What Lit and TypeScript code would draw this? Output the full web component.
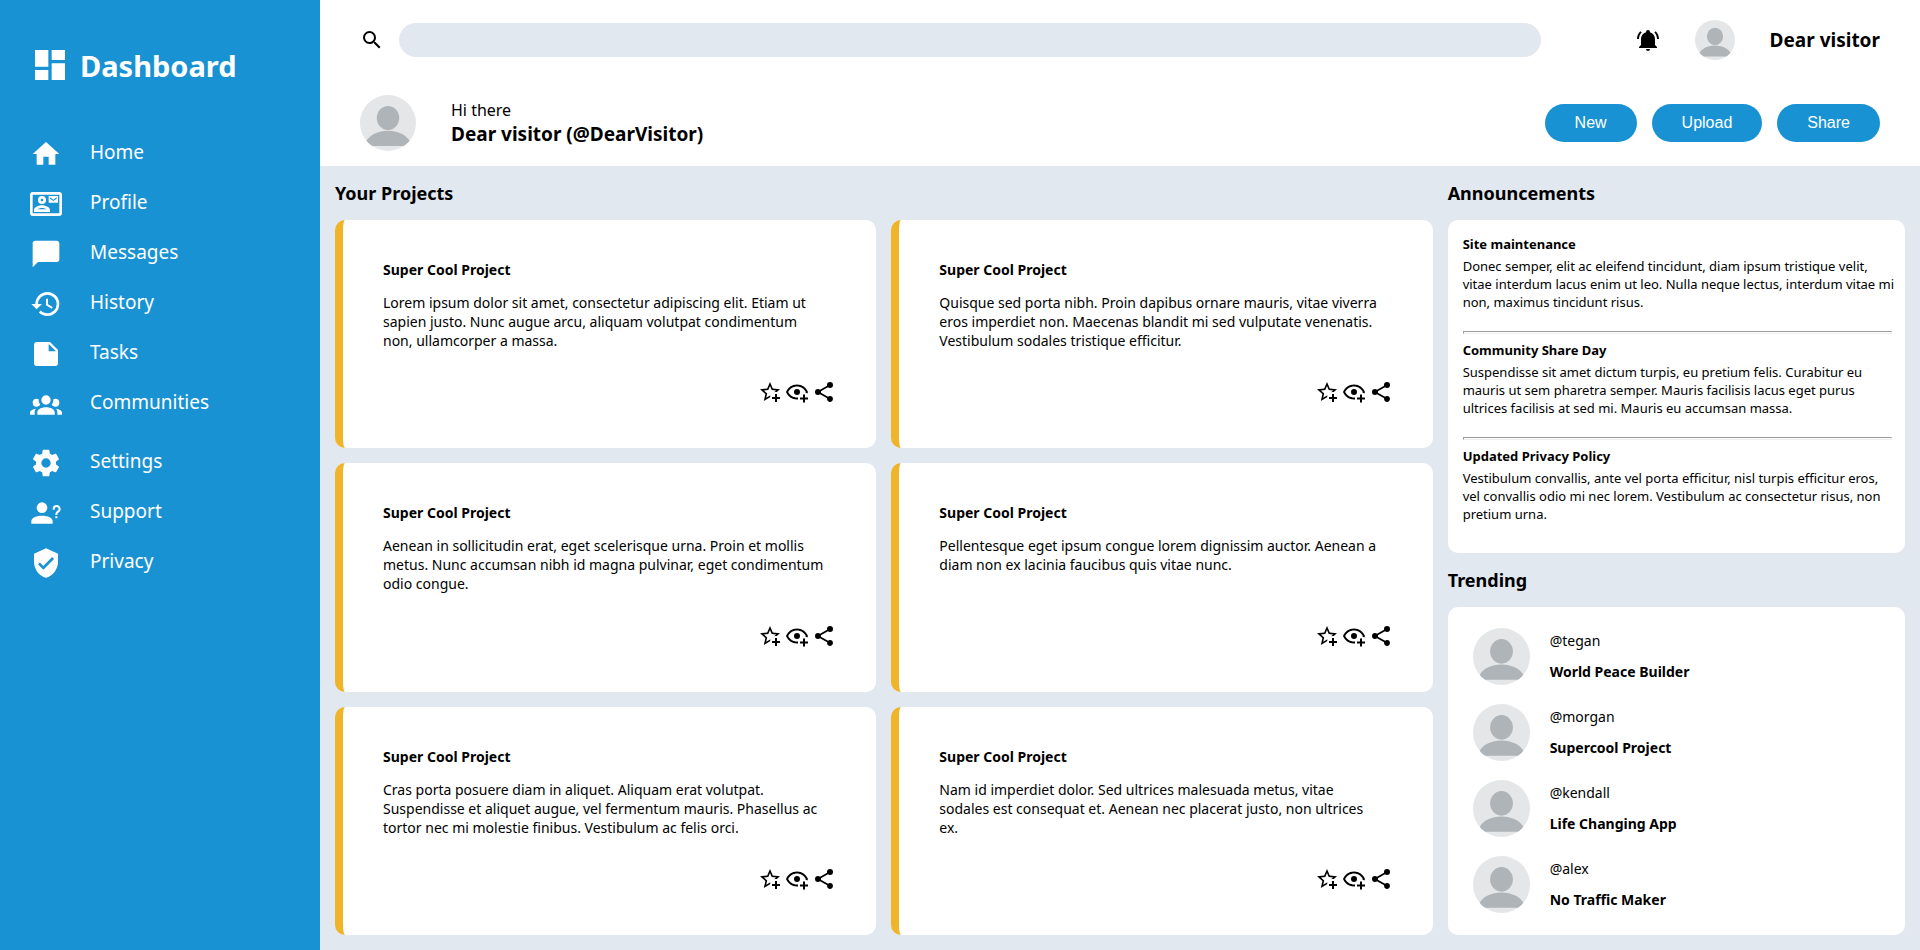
import { LitElement, html, css, svg } from "lit";
import { customElement, property } from "lit/decorators.js";

const ICONS: Record<string, string> = {
  dashboard: "M13,3V9H21V3M13,21H21V11H13M3,21H11V15H3M3,13H11V3H3V13Z",
  home: "M10,20V14H14V20H19V12H22L12,3L2,12H5V20H10Z",
  profile:
    "M22,3H2C0.9,3 0,3.9 0,5V19C0,20.1 0.9,21 2,21H22C23.1,21 24,20.1 24,19V5C24,3.9 23.1,3 22,3M22,19H2V5H22V19M21,6H14V11H21V6M20,8L17.5,9.75L15,8V7L17.5,8.75L20,7V8M9,12A3,3 0 0,0 12,9A3,3 0 0,0 9,6A3,3 0 0,0 6,9A3,3 0 0,0 9,12M9,8A1,1 0 0,1 10,9A1,1 0 0,1 9,10A1,1 0 0,1 8,9A1,1 0 0,1 9,8M15,16.59C15,14.09 11.03,13 9,13C6.97,13 3,14.09 3,16.59V18H15V16.59M5.5,16C6.22,15.5 7.7,15 9,15C10.31,15 11.8,15.5 12.5,16H5.5Z",
  message: "M20,2H4A2,2 0 0,0 2,4V22L6,18H20A2,2 0 0,0 22,16V4C22,2.89 21.1,2 20,2Z",
  history:
    "M13.5,8H12V13L16.28,15.54L17,14.33L13.5,12.25V8M13,3A9,9 0 0,0 4,12H1L4.96,16.03L9,12H6A7,7 0 0,1 13,5A7,7 0 0,1 20,12A7,7 0 0,1 13,19C11.07,19 9.32,18.21 8.06,16.94L6.64,18.36C8.27,20 10.5,21 13,21A9,9 0 0,0 22,12A9,9 0 0,0 13,3",
  task: "M14,10V4.5L19.5,10M5,3C3.89,3 3,3.89 3,5V19A2,2 0 0,0 5,21H19A2,2 0 0,0 21,19V9L15,3H5Z",
  group:
    "M12,5.5A3.5,3.5 0 0,1 15.5,9A3.5,3.5 0 0,1 12,12.5A3.5,3.5 0 0,1 8.5,9A3.5,3.5 0 0,1 12,5.5M5,8C5.56,8 6.08,8.15 6.53,8.42C6.38,9.85 6.8,11.27 7.66,12.38C7.16,13.34 6.16,14 5,14A3,3 0 0,1 2,11A3,3 0 0,1 5,8M19,8A3,3 0 0,1 22,11A3,3 0 0,1 19,14C17.84,14 16.84,13.34 16.34,12.38C17.2,11.27 17.62,9.85 17.47,8.42C17.92,8.15 18.44,8 19,8M5.5,18.25C5.5,16.18 8.41,14.5 12,14.5C15.59,14.5 18.5,16.18 18.5,18.25V20H5.5V18.25M0,20V18.5C0,17.11 1.89,15.94 4.45,15.6C3.86,16.28 3.5,17.22 3.5,18.25V20H0M24,20H20.5V18.25C20.5,17.22 20.14,16.28 19.55,15.6C22.11,15.94 24,17.11 24,18.5V20Z",
  cog: "M12,15.5A3.5,3.5 0 0,1 8.5,12A3.5,3.5 0 0,1 12,8.5A3.5,3.5 0 0,1 15.5,12A3.5,3.5 0 0,1 12,15.5M19.43,12.97C19.47,12.65 19.5,12.33 19.5,12C19.5,11.67 19.47,11.34 19.43,11L21.54,9.37C21.73,9.22 21.78,8.95 21.66,8.73L19.66,5.27C19.54,5.05 19.27,4.96 19.05,5.05L16.56,6.05C16.04,5.66 15.5,5.32 14.87,5.07L14.5,2.42C14.46,2.18 14.25,2 14,2H10C9.75,2 9.54,2.18 9.5,2.42L9.13,5.07C8.5,5.32 7.96,5.66 7.44,6.05L4.95,5.05C4.73,4.96 4.46,5.05 4.34,5.27L2.34,8.73C2.21,8.95 2.27,9.22 2.46,9.37L4.57,11C4.53,11.34 4.5,11.67 4.5,12C4.5,12.33 4.53,12.65 4.57,12.97L2.46,14.63C2.27,14.78 2.21,15.05 2.34,15.27L4.34,18.73C4.46,18.95 4.73,19.03 4.95,18.95L7.44,17.94C7.96,18.34 8.5,18.68 9.13,18.93L9.5,21.58C9.54,21.82 9.75,22 10,22H14C14.25,22 14.46,21.82 14.5,21.58L14.87,18.93C15.5,18.67 16.04,18.34 16.56,17.94L19.05,18.95C19.27,19.03 19.54,18.95 19.66,18.73L21.66,15.27C21.78,15.05 21.73,14.78 21.54,14.63L19.43,12.97Z",
  support:
    "M13,8A4,4 0 0,1 9,12A4,4 0 0,1 5,8A4,4 0 0,1 9,4A4,4 0 0,1 13,8M17,18V20H1V18C1,15.58 4.58,14 9,14C13.42,14 17,15.58 17,18M20.5,14.5V16H19V14.5H20.5M18.5,9.5H17V9A3,3 0 0,1 20,6C21.66,6 23,7.34 23,9C23,9.97 22.5,10.88 21.71,11.41L21.41,11.6C20.84,12 20.5,12.61 20.5,13.3V13.5H19V13.3C19,12.11 19.6,11 20.59,10.35L20.88,10.16C21.27,9.9 21.5,9.47 21.5,9A1.5,1.5 0 0,0 20,7.5A1.5,1.5 0 0,0 18.5,9V9.5Z",
  shield:
    "M10,17L6,13L7.41,11.59L10,14.17L16.59,7.58L18,9M12,1L3,5V11C3,16.55 6.84,21.74 12,23C17.16,21.74 21,16.55 21,11V5L12,1Z",
  search:
    "M9.5,3A6.5,6.5 0 0,1 16,9.5C16,11.11 15.41,12.59 14.44,13.73L14.71,14H15.5L20.5,19L19,20.5L14,15.5V14.71L13.73,14.44C12.59,15.41 11.11,16 9.5,16A6.5,6.5 0 0,1 3,9.5A6.5,6.5 0 0,1 9.5,3M9.5,5C7,5 5,7 5,9.5C5,12 7,14 9.5,14C12,14 14,12 14,9.5C14,7 12,5 9.5,5Z",
  bell: "M21,19V20H3V19L5,17V11C5,7.9 7.03,5.17 10,4.29C10,4.19 10,4.1 10,4A2,2 0 0,1 12,2A2,2 0 0,1 14,4C14,4.1 14,4.19 14,4.29C16.97,5.17 19,7.9 19,11V17L21,19M14,21A2,2 0 0,1 12,23A2,2 0 0,1 10,21M19.75,3.19L18.33,4.61C20.04,6.3 21,8.6 21,11H23C23,8.07 21.84,5.25 19.75,3.19M1,11H3C3,8.6 3.96,6.3 5.67,4.61L4.25,3.19C2.16,5.25 1,8.07 1,11Z",
  star: "M5.8,21L7.4,14L2,9.2L9.2,8.6L12,2L14.8,8.6L22,9.2L18.8,12H18C17.3,12 16.6,12.1 15.9,12.4L18.1,10.5L13.7,10.1L12,6.1L10.3,10.1L5.9,10.5L9.2,13.4L8.2,17.7L12,15.4L12.5,15.7C12.3,16.2 12.1,16.8 12.1,17.3L5.8,21M17,14V17H14V19H17V22H19V19H22V17H19V14H17Z",
  eye: "M12,4.5C7,4.5 2.73,7.61 1,12C2.73,16.39 7,19.5 12,19.5C12.36,19.5 12.72,19.5 13.08,19.45C13.03,19.13 13,18.82 13,18.5C13,18.14 13.04,17.78 13.1,17.42C12.74,17.46 12.37,17.5 12,17.5C8.24,17.5 4.83,15.36 3.18,12C4.83,8.64 8.24,6.5 12,6.5C15.76,6.5 19.17,8.64 20.82,12C20.7,12.24 20.56,12.45 20.43,12.68C21.09,12.84 21.72,13.11 22.29,13.5C22.56,13 22.8,12.5 23,12C21.27,7.61 17,4.5 12,4.5M12,9A3,3 0 0,0 9,12A3,3 0 0,0 12,15A3,3 0 0,0 15,12A3,3 0 0,0 12,9M18,14.5V17.5H15V19.5H18V22.5H20V19.5H23V17.5H20V14.5H18Z",
  share:
    "M18,16.08C17.24,16.08 16.56,16.38 16.04,16.85L8.91,12.7C8.96,12.47 9,12.24 9,12C9,11.76 8.96,11.53 8.91,11.3L15.96,7.19C16.5,7.69 17.21,8 18,8A3,3 0 0,0 21,5A3,3 0 0,0 18,2A3,3 0 0,0 15,5C15,5.24 15.04,5.47 15.09,5.7L8.04,9.81C7.5,9.31 6.79,9 6,9A3,3 0 0,0 3,12A3,3 0 0,0 6,15C6.79,15 7.5,14.69 8.04,14.19L15.16,18.34C15.11,18.55 15.08,18.77 15.08,19C15.08,20.61 16.39,21.91 18,21.91C19.61,21.91 20.92,20.61 20.92,19A2.92,2.92 0 0,0 18,16.08Z",
};

@customElement("ui-icon")
export class UiIcon extends LitElement {
  @property() name = "";
  static styles = css`
    :host { display: block; flex: none; width: 24px; height: 24px; }
    .glyph { display: block; width: 100%; height: 100%; fill: currentColor; }
  `;
  render() {
    return html`<svg class="glyph" viewBox="0 0 24 24" aria-hidden="true">${svg`<path d=${ICONS[this.name]} />`}</svg>`;
  }
}

@customElement("user-avatar")
export class UserAvatar extends LitElement {
  static styles = css`
    :host { display: block; flex: none; width: 40px; height: 40px; border-radius: 50%; overflow: hidden; }
    .face { display: block; width: 100%; height: 100%; }
    .ground { fill: #e4e6e7; }
    .figure { fill: #aeb4b7; }
  `;
  render() {
    return html`<svg class="face" viewBox="0 0 100 100" aria-hidden="true">
      <rect class="ground" width="100" height="100" />
      <ellipse class="figure" cx="50" cy="41" rx="20" ry="21.5" />
      <path class="figure" d="M8,91 C12,73 30,64 50,64 C70,64 88,73 92,91 Z" />
    </svg>`;
  }
}

const NAV = [
  [
    ["home", "Home"],
    ["profile", "Profile"],
    ["message", "Messages"],
    ["history", "History"],
    ["task", "Tasks"],
    ["group", "Communities"],
  ],
  [
    ["cog", "Settings"],
    ["support", "Support"],
    ["shield", "Privacy"],
  ],
];

const PROJECTS = [
  "Lorem ipsum dolor sit amet, consectetur adipiscing elit. Etiam ut sapien justo. Nunc augue arcu, aliquam volutpat condimentum non, ullamcorper a massa.",
  "Quisque sed porta nibh. Proin dapibus ornare mauris, vitae viverra eros imperdiet non. Maecenas blandit mi sed vulputate venenatis. Vestibulum sodales tristique efficitur.",
  "Aenean in sollicitudin erat, eget scelerisque urna. Proin et mollis metus. Nunc accumsan nibh id magna pulvinar, eget condimentum odio congue.",
  "Pellentesque eget ipsum congue lorem dignissim auctor. Aenean a diam non ex lacinia faucibus quis vitae nunc.",
  "Cras porta posuere diam in aliquet. Aliquam erat volutpat. Suspendisse et aliquet augue, vel fermentum mauris. Phasellus ac tortor nec mi molestie finibus. Vestibulum ac felis orci.",
  "Nam id imperdiet dolor. Sed ultrices malesuada metus, vitae sodales est consequat et. Aenean nec placerat justo, non ultrices ex.",
];

const NEWS = [
  ["Site maintenance", "Donec semper, elit ac eleifend tincidunt, diam ipsum tristique velit, vitae interdum lacus enim ut leo. Nulla neque lectus, interdum vitae mi non, maximus tincidunt risus."],
  ["Community Share Day", "Suspendisse sit amet dictum turpis, eu pretium felis. Curabitur eu mauris ut sem pharetra semper. Mauris facilisis lacus eget purus ultrices facilisis at sed mi. Mauris eu accumsan massa."],
  ["Updated Privacy Policy", "Vestibulum convallis, ante vel porta efficitur, nisl turpis efficitur eros, vel convallis odio mi nec lorem. Vestibulum ac consectetur risus, non pretium urna."],
];

const TRENDING = [
  ["@tegan", "World Peace Builder"],
  ["@morgan", "Supercool Project"],
  ["@kendall", "Life Changing App"],
  ["@alex", "No Traffic Maker"],
];

@customElement("app-root")
export class AppRoot extends LitElement {
  static styles = css`
    :host {
      display: grid;
      grid-template-columns: 1fr 5fr;
      min-height: 100vh;
      background: #e2e8f0;
      color: #000;
      font-family: "Noto Sans", sans-serif;
      font-size: 14px;
      line-height: 19px;
    }
    * { box-sizing: border-box; }
    h1, h2, h3, p, ul { margin: 0; padding: 0; }
    ul { list-style: none; }

    .sidebar { background: #1992d4; color: #fff; padding: 45px 30px; }
    .brand { display: flex; align-items: flex-start; gap: 10px; margin-bottom: 51px; }
    .brand-icon { width: 40px; height: 40px; }
    .brand-name { font-size: 29px; line-height: 42px; }
    .nav { display: flex; flex-direction: column; gap: 27px; }
    .nav-group { display: flex; flex-direction: column; gap: 18px; }
    .nav-link { display: flex; gap: 28px; height: 32px; color: inherit; text-decoration: none; font-size: 19px; line-height: 29px; }
    .nav-icon { width: 32px; height: 32px; }

    .page { display: flex; flex-direction: column; min-width: 0; }
    .header { background: #fff; padding: 20px 40px 15px; display: flex; flex-direction: column; gap: 35px; }
    .topbar { display: flex; align-items: center; gap: 35px; }
    .search { flex: 1; display: flex; align-items: center; gap: 15px; margin-right: 60px; }
    .search-input { flex: 1; min-width: 0; height: 34px; border: 0; border-radius: 17px; padding: 0 15px; background: #e2e8f0; font: inherit; }
    .bell { border: 0; padding: 0; background: none; color: inherit; }
    .user-name { font-size: 19px; line-height: 26px; font-weight: 700; }
    .welcome { display: flex; align-items: center; gap: 35px; }
    .welcome-avatar { width: 56px; height: 56px; }
    .hello { font-size: 16px; line-height: 22px; }
    .actions { display: flex; gap: 15px; margin-left: auto; }
    .action { border: 0; border-radius: 19px; padding: 10px 30px; background: #1992d4; color: #fff; font: 16px/18px "Liberation Sans", sans-serif; }

    .main { flex: 1; display: grid; grid-template-columns: 12fr 5fr; gap: 15px; padding: 15px; }
    .column { display: flex; flex-direction: column; gap: 15px; min-width: 0; }
    .heading { font-size: 18px; line-height: 24px; }
    .projects { flex: 1; display: grid; grid-template-columns: 1fr 1fr; grid-auto-rows: 1fr; gap: 15px; }
    .project { display: flex; flex-direction: column; gap: 14px; padding: 40px 40px 44px; border-left: 8px solid #f0b429; border-radius: 10px; background: #fff; }
    .title { font-size: 14px; }
    .summary { padding-right: 10px; }
    .tools { display: flex; justify-content: flex-end; gap: 3px; margin-top: auto; }
    .tool { border: 0; padding: 0; background: none; color: inherit; }

    .panel { background: #fff; border-radius: 10px; padding: 15px 10px 15px 15px; }
    .news { padding-bottom: 15px; font-size: 13px; line-height: 18px; }
    .news-title { font-size: 13px; margin-bottom: 4px; }
    .rule { margin: 5px 3px 7px 0; height: 3px; border: 1px solid; border-color: #9a9a9a #eee #eee #9a9a9a; }
    .trending { flex: 1; display: flex; flex-direction: column; justify-content: center; gap: 19px; padding: 14px 25px 16px; }
    .trend { display: flex; align-items: center; gap: 20px; }
    .trend-avatar { width: 57px; height: 57px; }
    .trend-text { display: flex; flex-direction: column; gap: 12px; }
  `;

  render() {
    return html`
      <aside class="sidebar">
        <div class="brand">
          <ui-icon class="brand-icon" name="dashboard"></ui-icon>
          <h1 class="brand-name">Dashboard</h1>
        </div>
        <nav class="nav" aria-label="Main">
          ${NAV.map(
            (group) => html`<ul class="nav-group">
              ${group.map(
                ([icon, label]) => html`<li>
                  <a class="nav-link" href="#"><ui-icon class="nav-icon" name=${icon}></ui-icon><span>${label}</span></a>
                </li>`
              )}
            </ul>`
          )}
        </nav>
      </aside>
      <div class="page">
        <header class="header">
          <div class="topbar">
            <div class="search">
              <label for="search" aria-label="Search"><ui-icon name="search"></ui-icon></label>
              <input class="search-input" id="search" type="search" />
            </div>
            <button class="bell" aria-label="Notifications"><ui-icon name="bell"></ui-icon></button>
            <user-avatar></user-avatar>
            <span class="user-name">Dear visitor</span>
          </div>
          <div class="welcome">
            <user-avatar class="welcome-avatar"></user-avatar>
            <div>
              <p class="hello">Hi there</p>
              <p class="user-name">Dear visitor (@DearVisitor)</p>
            </div>
            <div class="actions">
              ${["New", "Upload", "Share"].map((a) => html`<button class="action">${a}</button>`)}
            </div>
          </div>
        </header>
        <main class="main">
          <section class="column">
            <h2 class="heading">Your Projects</h2>
            <div class="projects">
              ${PROJECTS.map(
                (text) => html`<article class="project">
                  <h3 class="title">Super Cool Project</h3>
                  <p class="summary">${text}</p>
                  <div class="tools">
                    <button class="tool" aria-label="Star"><ui-icon name="star"></ui-icon></button>
                    <button class="tool" aria-label="Watch"><ui-icon name="eye"></ui-icon></button>
                    <button class="tool" aria-label="Share"><ui-icon name="share"></ui-icon></button>
                  </div>
                </article>`
              )}
            </div>
          </section>
          <div class="column">
            <h2 class="heading">Announcements</h2>
            <section class="panel">
              ${NEWS.map(
                ([title, text], i) => html`${i ? html`<hr class="rule" />` : ""}
                  <article class="news">
                    <h3 class="news-title">${title}</h3>
                    <p>${text}</p>
                  </article>`
              )}
            </section>
            <h2 class="heading">Trending</h2>
            <ul class="panel trending">
              ${TRENDING.map(
                ([handle, project]) => html`<li class="trend">
                  <user-avatar class="trend-avatar"></user-avatar>
                  <div class="trend-text"><span>${handle}</span><strong>${project}</strong></div>
                </li>`
              )}
            </ul>
          </div>
        </main>
      </div>
    `;
  }
}
